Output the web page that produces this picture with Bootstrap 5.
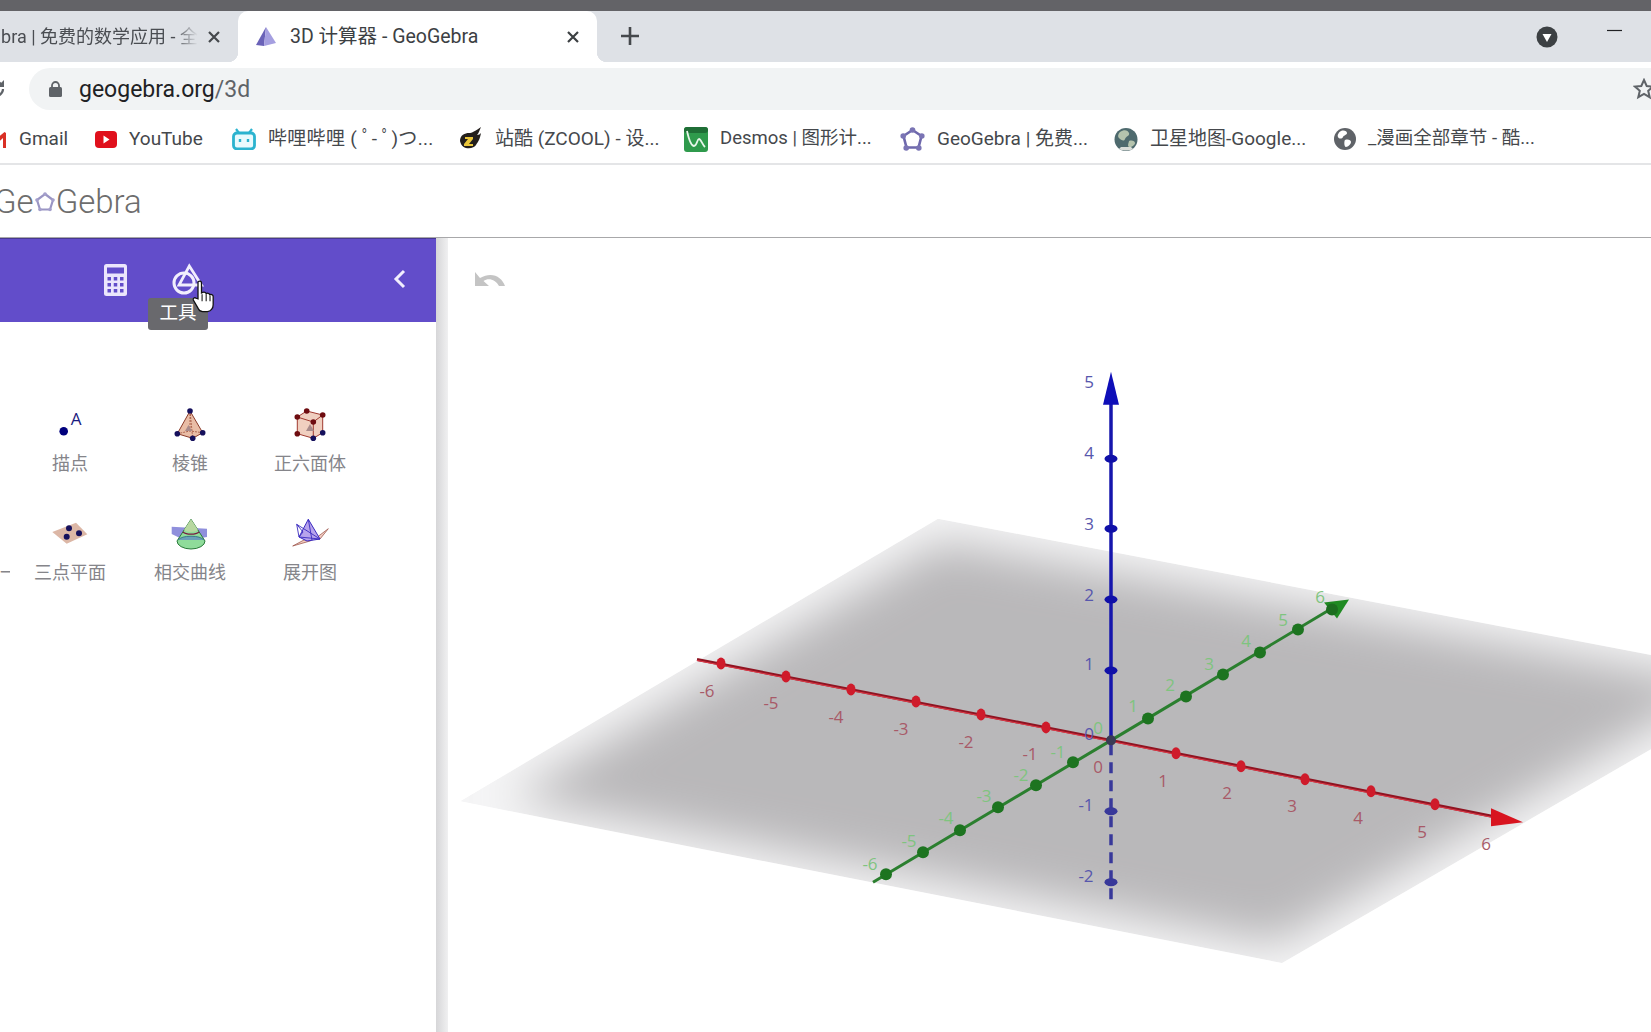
<!DOCTYPE html>
<html lang="zh-CN">
<head>
    <meta charset="UTF-8">
    <title>3D 计算器 - GeoGebra</title>
    <link href="https://cdn.jsdelivr.net/npm/bootstrap@5.3.2/dist/css/bootstrap.min.css" rel="stylesheet">
    <style>
        html, body { height: 100%; overflow: hidden; }
        body {
            background: #fff;
            font-family: Roboto, "Noto Sans CJK SC", sans-serif;
            color: #3c4043;
        }
        .win-top { height: 11px; background: #636367; }

        /* pestañas */
        .tab-strip { height: 51px; background: #dee1e6; }
        .tab-off { width: 238px; padding-right: 17px; color: #4a4d52; font-size: 18px; }
        .tab-off-text {
            flex-shrink: 0;
            width: 197px;
            margin-right: 9px;
            text-align: right;
            white-space: nowrap;
            direction: rtl;
            overflow: hidden;
            -webkit-mask-image: linear-gradient(to right, #000 88%, transparent 100%);
        }
        .tab-on {
            position: relative;
            width: 359px;
            background: #fff;
            border-radius: 10px 10px 0 0;
            padding: 0 17px 0 17px;
            font-size: 19.5px;
        }
        .tab-on::before, .tab-on::after {
            content: "";
            position: absolute;
            bottom: 0;
            width: 10px;
            height: 10px;
        }
        .tab-on::before { left: -10px; background: radial-gradient(circle at 0 0, transparent 10px, #fff 10.5px); }
        .tab-on::after { right: -10px; background: radial-gradient(circle at 100% 0, transparent 10px, #fff 10.5px); }
        .tab-title { margin-left: 13px; }
        .tab-new { margin-left: 23px; padding-bottom: 2px; }
        .strip-end { width: 115px; padding-right: 28px; }

        /* barra de direccion */
        .addr-row { height: 48px; background: #fff; padding-top: 6px; }
        .addr-reload { margin-left: -13px; margin-right: 24px; flex-shrink: 0; }
        .addr-pill {
            height: 42px;
            background: #f1f3f4;
            border-radius: 21px 0 0 21px;
            padding-left: 20px;
            font-size: 23px;
            color: #202124;
        }
        .addr-dim { color: #5f6368; }
        .addr-text { margin-left: 17px; padding-top: 2px; }
        .addr-star { margin-right: -4px; }

        /* marcadores */
        .bm-row {
            display: grid;
            grid-template-columns: 95px 137px 227px 225px 216px 214px 220px auto;
            align-items: center;
            height: 55px;
            border-bottom: 2px solid #e4e5e7;
            font-size: 19px;
            white-space: nowrap;
            color: #45484c;
            padding-top: 5px;
        }
        .bm-item svg { margin-right: 12px; flex-shrink: 0; }
        .bm-item .bm-gmail { margin-left: -10px; }
        .bm-wide { letter-spacing: .3px; }
        .bm-narrow { font-size: 18.5px; }

        /* cabecera GeoGebra */
        .gg-head {
            height: 72px;
            font-family: Roboto, sans-serif;
            font-weight: 300;
            font-size: 33px;
            color: #6d6d6d;
            margin-left: -6px;
            padding-top: 2px;
        }

        /* area de trabajo */
        .work-area { height: 795px; border-top: 1px solid #a8a8aa; }
        .side-panel { width: 436px; flex-shrink: 0; overflow: hidden; }
        .side-head {
            position: relative;
            height: 84px;
            background: #624dca;
            border-top: 1px solid #47388f;
        }
        .hand-cursor { position: absolute; left: 192px; top: 40px; z-index: 3; }
        .tip-box {
            position: absolute;
            left: 148px;
            top: 59px;
            width: 60px;
            height: 32px;
            background: #69696d;
            border-radius: 3px;
            color: #fff;
            font-size: 18.5px;
            line-height: 30px;
            text-align: center;
            z-index: 2;
        }
        .head-icon { position: absolute; }
        .tool-grid {
            display: grid;
            grid-template-columns: 10px repeat(3, 120px);
            grid-auto-rows: 73px;
            row-gap: 36px;
            padding-top: 82px;
        }
        .tool-cell { display: flex; flex-direction: column; align-items: center; gap: 7px; }
        .tool-name { font-size: 18px; line-height: 26px; color: #85858a; white-space: nowrap; }
        .tool-stub {
            align-self: end;
            color: #85858a;
            font-size: 18px;
            line-height: 26px;
            overflow: hidden;
            text-align: right;
            padding-right: 3px;
        }
        .side-gutter { width: 12px; flex-shrink: 0; background: linear-gradient(to right, #d6d6d8, #f0f0f1); }
        .view-3d { position: relative; flex-grow: 1; overflow: hidden; }
        .view-3d svg { position: absolute; left: 0; top: 0; width: 100%; height: 100%; }
        .ax-labels text {
            font-family: "Open Sans", sans-serif;
            font-size: 17px;
            text-anchor: middle;
            dominant-baseline: central;
        }
    </style>
</head>
<body>

<div class="win-top"></div>

<div class="tab-strip d-flex align-items-stretch">
    <div class="tab-off d-flex align-items-center justify-content-end">
        <span class="tab-off-text">GeoGebra | 免费的数学应用 - 全</span>
        <svg width="14" height="14" viewBox="0 0 14 14"><path d="M2 2l10 10M12 2L2 12" stroke="#45484c" stroke-width="2.2"/></svg>
    </div>
    <div class="tab-on d-flex align-items-center">
        <svg width="22" height="22" viewBox="0 0 22 22">
            <path d="M11 1L1 19l8 1z" fill="#6a62b8"/><path d="M11 1l10 16-12 3z" fill="#a59fe0"/>
        </svg>
        <span class="tab-title flex-grow-1">3D 计算器 - GeoGebra</span>
        <svg width="14" height="14" viewBox="0 0 14 14"><path d="M2 2l10 10M12 2L2 12" stroke="#3c4043" stroke-width="2.2"/></svg>
    </div>
    <div class="tab-new d-flex align-items-center">
        <svg width="20" height="20" viewBox="0 0 20 20"><path d="M10 1v18M1 10h18" stroke="#45484c" stroke-width="2.6"/></svg>
    </div>
    <div class="flex-grow-1"></div>
    <div class="strip-end d-flex justify-content-between align-items-start">
        <svg class="align-self-center" width="22" height="22" viewBox="0 0 22 22">
            <circle cx="11" cy="11" r="10.5" fill="#3c4043"/><path d="M6.5 8h9L11 16z" fill="#fff"/>
        </svg>
        <svg class="mt-3" width="16" height="8" viewBox="0 0 16 8"><path d="M0 3.5h15" stroke="#202124" stroke-width="1.2"/></svg>
    </div>
</div>

<div class="addr-row d-flex">
    <svg class="addr-reload align-self-center" width="18" height="18" viewBox="0 0 18 18">
        <path d="M16 9a7 7 0 1 1-2-5" fill="none" stroke="#5f6368" stroke-width="2.2"/><path d="M17 0v7h-7z" fill="#5f6368"/>
    </svg>
    <div class="addr-pill d-flex align-items-center flex-grow-1">
        <svg width="13" height="16" viewBox="0 0 13 16">
            <rect x="0" y="6" width="13" height="10" rx="1.5" fill="#5f6368"/>
            <path d="M3 7V4.5a3.5 3.5 0 0 1 7 0V7" fill="none" stroke="#5f6368" stroke-width="1.8"/>
        </svg>
        <span class="addr-text flex-grow-1">geogebra.org<span class="addr-dim">/3d</span></span>
        <svg class="addr-star" width="22" height="22" viewBox="0 0 22 22">
            <path d="M11 2l2.7 6 6.3.6-4.8 4.2 1.5 6.4L11 15.8 5.3 19.2l1.5-6.4L2 8.6 8.3 8z" fill="none" stroke="#5f6368" stroke-width="2"/>
        </svg>
    </div>
</div>

<div class="bm-row">
    <div class="bm-item d-flex align-items-center">
        <svg class="bm-gmail" width="17" height="17" viewBox="0 0 17 17"><path d="M1 17V2l1.5-1L8.5 6l6-5L16 2v15h-3V7L8.5 11 4 7v10z" fill="#d93025"/></svg>
        Gmail
    </div>
    <div class="bm-item d-flex align-items-center">
        <svg width="22" height="17" viewBox="0 0 22 17"><rect width="22" height="17" rx="4" fill="#e0101c"/><path d="M8.5 4.5l6 4-6 4z" fill="#fff"/></svg>
        YouTube
    </div>
    <div class="bm-item bm-wide d-flex align-items-center">
        <svg width="24" height="22" viewBox="0 0 24 22">
            <path d="M7 5L4 1M17 5l3-4" stroke="#2bb3cf" stroke-width="2.2"/>
            <rect x="1.5" y="5" width="21" height="16" rx="3.5" fill="#e9fafd" stroke="#2bb3cf" stroke-width="2.8"/>
            <path d="M8 11v3M16 11v3" stroke="#2bb3cf" stroke-width="2.4"/>
        </svg>
        哔哩哔哩 ( ﾟ- ﾟ)つ...
    </div>
    <div class="bm-item d-flex align-items-center">
        <svg width="24" height="24" viewBox="0 0 24 24">
            <path d="M1 14c0-6 5-8 9-8 3 0 6-2 12-6-2 4-2 6-4 8 2 0 3-1 4-2-1 6-3 9-5 12-2 4-14 6-16-4z" fill="#231f1c"/>
            <path d="M6 10h8v2l-4 5h4v2H5v-2l4-5H6z" fill="#e9c53a"/>
        </svg>
        站酷 (ZCOOL) - 设...
    </div>
    <div class="bm-item bm-narrow d-flex align-items-center">
        <svg width="24" height="25" viewBox="0 0 24 25">
            <rect x="0" y="0" width="24" height="25" rx="3" fill="#2f9a4c"/>
            <rect x="0" y="0" width="24" height="6" rx="3" fill="#1f6e36"/>
            <path d="M3 4c2 9 4 15 7 15 3 0 3-7 5-7s3 5 6 8" fill="none" stroke="#e8f5ea" stroke-width="1.8"/>
        </svg>
        Desmos | 图形计...
    </div>
    <div class="bm-item d-flex align-items-center">
        <svg width="25" height="25" viewBox="0 0 25 25">
            <path d="M12.5 3L21.5 9l-3 11.5H6.5L3.5 9z" fill="#fff" stroke="#6e68ac" stroke-width="2.6"/>
            <g fill="#7a74b4"><circle cx="12.5" cy="3" r="2.8"/><circle cx="21.8" cy="9" r="2.8"/><circle cx="18.8" cy="21" r="2.8"/><circle cx="6.2" cy="21" r="2.8"/><circle cx="3.2" cy="9" r="2.8"/></g>
        </svg>
        GeoGebra | 免费...
    </div>
    <div class="bm-item d-flex align-items-center">
        <svg width="24" height="25" viewBox="0 0 24 25">
            <circle cx="12" cy="12.5" r="11.5" fill="#4e6a6e"/>
            <path d="M6 5c4-3 8-2 9 1s-3 3-4 6-4 1-6-1 0-5 1-6zM15 14c3-1 6 0 6 2s-4 5-6 4 0-5 0-6z" fill="#b5c4ae"/>
            <path d="M5 22c4 2 10 2 14 0l-2-2H7z" fill="#d8dcd8"/>
        </svg>
        卫星地图-Google...
    </div>
    <div class="bm-item bm-narrow d-flex align-items-center">
        <svg width="22" height="22" viewBox="0 0 22 22">
            <circle cx="11" cy="11" r="11" fill="#5f6368"/>
            <path d="M7 3c3-1 6 0 6 2s-3 2-4 4-4 2-5 0 1-5 3-6zM11 12c3-1 6 0 6 2s-3 5-5 5-2-6-1-7z" fill="#fff"/>
        </svg>
        _漫画全部章节 - 酷...
    </div>
</div>

<div class="gg-head d-flex align-items-center">
    <span>Ge</span>
    <svg width="22" height="22" viewBox="0 0 22 22">
        <path d="M11 3l8 6-3 9.5H6L3 9z" fill="#fff" stroke="#9a95c4" stroke-width="2.2"/>
        <g fill="#a5a0cc"><circle cx="11" cy="3" r="1.8"/><circle cx="19" cy="9" r="1.8"/><circle cx="16" cy="18.5" r="1.8"/><circle cx="6" cy="18.5" r="1.8"/><circle cx="3" cy="9" r="1.8"/></g>
    </svg>
    <span>Gebra</span>
</div>

<div class="work-area d-flex">
    <div class="side-panel">
        <div class="side-head">
            <svg class="head-icon" style="left:104px;top:25px" width="23" height="32" viewBox="0 0 23 32">
                <rect width="23" height="32" rx="2.5" fill="#ebe6fc"/>
                <rect x="3" y="3.5" width="17" height="6" fill="#624dca"/>
                <g fill="#624dca">
                    <rect x="3.5" y="13" width="3.5" height="3.5"/><rect x="9.75" y="13" width="3.5" height="3.5"/><rect x="16" y="13" width="3.5" height="3.5"/>
                    <rect x="3.5" y="19" width="3.5" height="3.5"/><rect x="9.75" y="19" width="3.5" height="3.5"/><rect x="16" y="19" width="3.5" height="3.5"/>
                    <rect x="3.5" y="25" width="3.5" height="3.5"/><rect x="9.75" y="25" width="3.5" height="3.5"/><rect x="16" y="25" width="3.5" height="3.5"/>
                </g>
            </svg>
            <svg class="head-icon" style="left:171px;top:24px" width="34" height="32" viewBox="0 0 34 32">
                <path d="M18.3 3L30.5 22H8z" fill="none" stroke="#f1eefd" stroke-width="2.8"/>
                <circle cx="13" cy="20" r="10" fill="none" stroke="#f1eefd" stroke-width="3"/>
            </svg>
            <svg class="head-icon" style="left:393px;top:30px" width="14" height="20" viewBox="0 0 14 20">
                <path d="M11 2L3 10l8 8" fill="none" stroke="#f1eefd" stroke-width="3"/>
            </svg>
            <div class="tip-box">工具</div>
            <svg class="hand-cursor" width="26" height="35" viewBox="0 0 22 30">
                <path d="M5 2.5c1.5-1.5 3-.5 3 1V12l1-.5c1.5-.5 2.5 0 3 1 1-.5 2.500-.5 3 .8 1-.5 3 0 3 1.700V22c0 3-2 6-5 6H9c-2 0-3-1-4-3l-4-7c-.5-1.500 1-2.500 2.500-1.500L5 17z" fill="#fff" stroke="#111" stroke-width="1.100"/>
                <path d="M8.500 13v6M12 13v6M15.300 14v5" stroke="#111" stroke-width=".9"/>
            </svg>
        </div>
        <div class="tool-grid">
            <div></div>
            <div class="tool-cell">
                <svg width="40" height="40" viewBox="0 0 40 40">
                    <circle cx="13.700" cy="27.300" r="4.300" fill="#00007d"/>
                    <text x="26" y="21" font-family="Open Sans, sans-serif" font-size="17" fill="#1a1a80" text-anchor="middle">A</text>
                </svg>
                <div class="tool-name">描点</div>
            </div>
            <div class="tool-cell">
                <svg width="40" height="40" viewBox="0 0 40 40">
                    <path d="M20 7L7.300 29.700l15.400 4.600 10-5.600z" fill="#e9bda6" stroke="#8a3a28" stroke-width="1"/>
                    <path d="M20 7L22.700 34.300M20 7v20M7.300 29.700L20 27l12.700 1.700" fill="none" stroke="#a0503a" stroke-width=".8" stroke-dasharray="2 1"/>
                    <path d="M15 27l3.500-6 3.500 6z" fill="#a88a8a"/>
                    <g fill="#15105c"><circle cx="20" cy="7" r="2.800"/><circle cx="7.300" cy="29.700" r="2.800"/><circle cx="32.700" cy="28.700" r="2.800"/><circle cx="22.700" cy="34.300" r="2.800"/></g>
                </svg>
                <div class="tool-name">棱锥</div>
            </div>
            <div class="tool-cell">
                <svg width="40" height="40" viewBox="0 0 40 40">
                    <path d="M16.700 7L32.700 11V28.700L23.300 34.300 7.300 29.700V13z" fill="#f0cfc0"/>
                    <path d="M7.300 13L23.300 18 32.700 11M23.300 18V34.300M7.300 13L16.700 7 32.700 11V28.700L23.300 34.300 7.300 29.700z" fill="none" stroke="#a03a30" stroke-width="1"/>
                    <path d="M16 27l4-7 4 7z" fill="#a88a8a"/>
                    <g fill="#6e0c10"><circle cx="16.700" cy="7" r="2.800"/><circle cx="7.300" cy="13" r="2.800"/><circle cx="32.700" cy="11" r="2.800"/><circle cx="23.300" cy="18" r="2.800"/><circle cx="7.300" cy="29.700" r="2.800"/></g>
                    <g fill="#15105c"><circle cx="32.700" cy="28.700" r="2.800"/><circle cx="23.300" cy="34.300" r="2.800"/></g>
                </svg>
                <div class="tool-name">正六面体</div>
            </div>
            <div class="tool-stub">一</div>
            <div class="tool-cell">
                <svg width="40" height="40" viewBox="0 0 40 40">
                    <path d="M2.300 19L26 9.700 37.300 21.300 16.700 30.700z" fill="#dcb7a6"/>
                    <g fill="#15105c"><circle cx="19" cy="15.300" r="3"/><circle cx="16.700" cy="23.700" r="3"/><circle cx="29" cy="20.300" r="3"/></g>
                </svg>
                <div class="tool-name">三点平面</div>
            </div>
            <div class="tool-cell">
                <svg width="40" height="40" viewBox="0 0 40 40">
                    <path d="M1.700 13.700L37 15.700V24L25 26H12L1.700 21z" fill="#8f8fdc"/>
                    <path d="M21 6.300L7 28a14 8 0 0 0 28 0z" fill="#8fdc9a" stroke="#2a7a3a" stroke-width="1"/>
                    <path d="M21 6.300L14 17a8 4 0 0 0 14 0z" fill="#b8d8a0"/>
                    <path d="M13 19a9 4 0 0 0 16 0" fill="none" stroke="#7a1a40" stroke-width="1.300"/>
                    <path d="M8 27a14 6 0 0 1 26 0" fill="#6aa0b8" stroke="#3a7a8a" stroke-width="1"/>
                </svg>
                <div class="tool-name">相交曲线</div>
            </div>
            <div class="tool-cell">
                <svg width="40" height="40" viewBox="0 0 40 40">
                    <path d="M2.700 33L14 27l16 -1 8.300 -10.300L26 25l-6 3z" fill="#f3cfc4" stroke="#a05a50" stroke-width=".8"/>
                    <path d="M18.300 6.300L9 24l8 4 13-2z" fill="#b7a3ec" stroke="#3a2ac0" stroke-width="1"/>
                    <path d="M6.700 11.300L13 19l-4 5zM18.300 6.300L22 27M9 24l21 2M6.700 11.300L30 26" fill="none" stroke="#3a2ac0" stroke-width=".9"/>
                </svg>
                <div class="tool-name">展开图</div>
            </div>
        </div>
    </div>
    <div class="side-gutter"></div>
    <div class="view-3d">
        <svg viewBox="448 238 1203 795" preserveAspectRatio="none">
            <defs>
                <filter id="softEdge" filterUnits="userSpaceOnUse" x="300" y="400" width="1600" height="700">
                    <feGaussianBlur stdDeviation="23"/>
                </filter>
                <clipPath id="planeClip"><path d="M460 802L938 519 1773 679 1282 964z"/></clipPath>
            </defs>

            <!-- plano xOy -->
            <g clip-path="url(#planeClip)">
                <path d="M460 802L938 519 1773 679 1282 964z" fill="#f5f5f6"/>
                <path d="M510 799L942 542 1725 684 1276 944z" fill="#b9b8ba" filter="url(#softEdge)"/>
            </g>

            <!-- deshacer -->
            <path d="M475 272v14h14l-5.500-5c5-3.500 12-1.500 15.500 5h6c-3-9-13-15-25-8z" fill="#c4c4c4"/>

            <!-- eje x -->
            <path d="M697 660L1111 741 1492 817" stroke="#8f1422" stroke-width="3" fill="none"/>
            <path d="M697 661L1111 742 1492 818" stroke="#e23a48" stroke-width="1" fill="none"/>
            <path d="M1491 809L1523 823 1491 827z" fill="#d8141f"/>
            <g fill="#cf1b2b">
                <ellipse cx="721" cy="664" rx="4.500" ry="6"/><ellipse cx="786" cy="677" rx="4.500" ry="6"/><ellipse cx="851" cy="690" rx="4.500" ry="6"/>
                <ellipse cx="916" cy="702" rx="4.500" ry="6"/><ellipse cx="981" cy="715" rx="4.500" ry="6"/><ellipse cx="1046" cy="728" rx="4.500" ry="6"/>
                <ellipse cx="1176" cy="754" rx="4.500" ry="6"/><ellipse cx="1241" cy="767" rx="4.500" ry="6"/><ellipse cx="1305" cy="780" rx="4.500" ry="6"/>
                <ellipse cx="1371" cy="792" rx="4.500" ry="6"/><ellipse cx="1435" cy="805" rx="4.500" ry="6"/>
            </g>

            <!-- eje z, parte negativa -->
            <path d="M1111 745V900" stroke="#38389a" stroke-width="3.500" stroke-dasharray="11 7" fill="none"/>
            <g fill="#38389a"><ellipse cx="1111" cy="812" rx="6.500" ry="4"/><ellipse cx="1111" cy="883" rx="6.500" ry="4"/></g>

            <!-- eje y -->
            <path d="M873 883L1111 741 1330 610" stroke="#2b7f2f" stroke-width="3" fill="none"/>
            <path d="M1324 603L1349 600 1337 619z" fill="#1f8a22"/>
            <circle cx="1332" cy="610" r="6" fill="#1c6d1f"/>
            <g fill="#1d7420">
                <circle cx="886" cy="875" r="6"/><circle cx="923" cy="853" r="6"/><circle cx="960" cy="831" r="6"/>
                <circle cx="998" cy="808" r="6"/><circle cx="1036" cy="786" r="6"/><circle cx="1073" cy="763" r="6"/>
                <circle cx="1148" cy="719" r="6"/><circle cx="1186" cy="697" r="6"/><circle cx="1223" cy="675" r="6"/>
                <circle cx="1260" cy="653" r="6"/><circle cx="1298" cy="630" r="6"/>
            </g>

            <!-- eje z -->
            <path d="M1111 404V741" stroke="#1616ad" stroke-width="3.500" fill="none"/>
            <path d="M1111 372L1119 405H1103z" fill="#0e0eb8"/>
            <g fill="#1010a8">
                <ellipse cx="1111" cy="459" rx="6.500" ry="4"/><ellipse cx="1111" cy="529" rx="6.500" ry="4"/>
                <ellipse cx="1111" cy="600" rx="6.500" ry="4"/><ellipse cx="1111" cy="671" rx="6.500" ry="4"/>
            </g>
            <circle cx="1111" cy="741" r="5" fill="#3b3b55"/>

            <g class="ax-labels" fill="#a85a68">
                <text x="707" y="691">-6</text><text x="771" y="703">-5</text><text x="836" y="717">-4</text>
                <text x="901" y="729">-3</text><text x="966" y="742">-2</text><text x="1030" y="754">-1</text>
                <text x="1098" y="767">0</text><text x="1163" y="781">1</text><text x="1227" y="793">2</text>
                <text x="1292" y="806">3</text><text x="1358" y="818">4</text><text x="1422" y="832">5</text><text x="1486" y="844">6</text>
            </g>
            <g class="ax-labels" fill="#7fc47f">
                <text x="870" y="864">-6</text><text x="909" y="841">-5</text><text x="946" y="818">-4</text>
                <text x="984" y="796">-3</text><text x="1021" y="775">-2</text><text x="1058" y="752">-1</text>
                <text x="1098" y="728">0</text><text x="1133" y="706">1</text><text x="1170" y="685">2</text>
                <text x="1209" y="664">3</text><text x="1246" y="641">4</text><text x="1283" y="620">5</text><text x="1320" y="597">6</text>
            </g>
            <g class="ax-labels" fill="#5757ad">
                <text x="1089" y="382">5</text><text x="1089" y="453">4</text><text x="1089" y="524">3</text>
                <text x="1089" y="595">2</text><text x="1089" y="664">1</text><text x="1089" y="734">0</text>
                <text x="1086" y="805">-1</text><text x="1086" y="876">-2</text>
            </g>
        </svg>
    </div>
</div>

</body>
</html>
